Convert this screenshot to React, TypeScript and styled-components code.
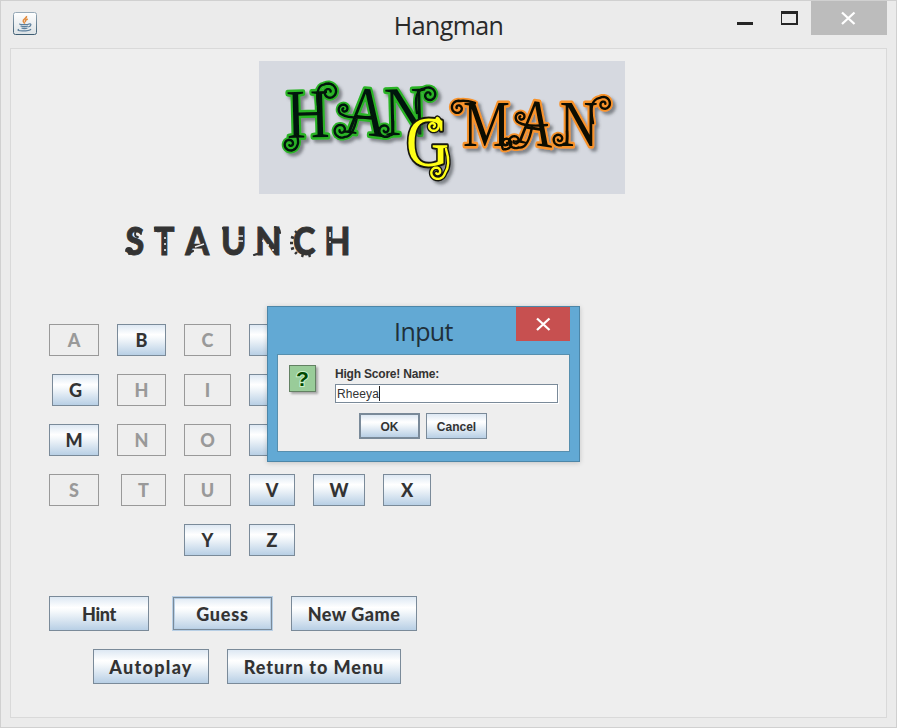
import React from "react";
import styled, { createGlobalStyle, css } from "styled-components";

const GlobalStyle = createGlobalStyle`
  * { box-sizing: border-box; }
  body { margin: 0; overflow: hidden; background: #ebebeb; }
  button { cursor: default; }
`;

const metal = "linear-gradient(#dde8f3 0%, #ffffff 32%, #f7fafc 42%, #b8cfe5 100%)";

const Window = styled.div`
  width: 897px;
  height: 728px;
  border: 1px solid #d0d0d0;
  background: #ebebeb;
  padding: 0 9px 9px;
  display: flex;
  flex-direction: column;
  position: relative;
`;

const TitleBar = styled.header`
  height: 47px;
  flex: none;
  display: grid;
  grid-template-columns: 150px 1fr 150px;
`;

const AppIcon = styled.svg`
  margin: 11px 0 0 3px;
`;

const Title = styled.h1`
  margin: 0;
  padding-top: 6px;
  font: 400 25px/36px "Open Sans", "Noto Sans", sans-serif;
  letter-spacing: -0.6px;
  color: #2a2a2a;
  text-align: center;
`;

const Controls = styled.div`
  display: flex;
  justify-content: flex-end;
`;

const ControlButton = styled.button<{ $w: number; $bg?: string }>`
  width: ${(p) => p.$w}px;
  height: 34px;
  flex: none;
  border: 0;
  padding: 0;
  background: ${(p) => p.$bg ?? "transparent"};
  display: block;
  svg { display: block; }
`;

const Client = styled.main`
  flex: 1;
  border: 1px solid #d9d9d9;
  background: #eeeeee;
  padding: 12px 0 0 38px;
  display: flex;
  flex-direction: column;
  align-items: flex-start;
`;

const Logo = styled.svg`
  margin-left: 210px;
  display: block;
  flex: none;
  background: #d6d9e0;
`;

const Word = styled.svg`
  margin: 26px 0 0 70px;
  display: block;
  flex: none;
`;

const Keys = styled.div`
  margin-top: 58px;
  display: grid;
  grid-template-columns: 50px 49px 47px 46px 52px 48px;
  grid-auto-rows: 32px;
  column-gap: 18px;
  row-gap: 18px;
`;

const GameButton = styled.button`
  border: 1px solid #7a8a99;
  border-radius: 0;
  padding: 0;
  background: ${metal};
  color: #333333;
  font: 900 18px/1 Lato, "Open Sans", sans-serif;
  display: flex;
  align-items: center;
  justify-content: center;
  white-space: nowrap;
`;

const Key = styled(GameButton)<{ $col?: number; $w?: number }>`
  height: 32px;
  justify-self: ${(p) => (p.$w ? "end" : "stretch")};
  ${(p) => p.$w && css`width: ${p.$w}px;`}
  ${(p) => p.$col && css`grid-column: ${p.$col};`}
  &:disabled {
    background: none;
    border-color: #999999;
    color: #999999;
  }
`;

const Actions = styled.div<{ $top: number; $left?: number }>`
  display: flex;
  gap: 18px;
  margin: ${(p) => p.$top}px 0 0 ${(p) => p.$left ?? 0}px;
`;

const Action = styled(GameButton)<{ $w: number; $spacing: number; $focused?: boolean }>`
  width: ${(p) => p.$w}px;
  height: 35px;
  padding-top: 1px;
  letter-spacing: ${(p) => p.$spacing}px;
  ${(p) =>
    p.$focused &&
    css`
      margin-left: 5px;
      outline: 0;
      border-color: #b8cfe5;
      box-shadow: inset 0 0 0 1px #7a8a99, inset 0 0 0 2px #b8cfe5;
    `}
`;

const Dialog = styled.section`
  position: absolute;
  left: 266px;
  top: 305px;
  width: 313px;
  height: 156px;
  border: 1px solid #4c86a8;
  background: #62a9d4;
  box-shadow: 0 1px 5px rgba(0, 0, 0, 0.18);
  padding: 0 9px 9px;
  display: flex;
  flex-direction: column;
`;

const DialogBar = styled.header`
  height: 47px;
  flex: none;
  display: grid;
  grid-template-columns: 54px 1fr 54px;
`;

const DialogTitle = styled(Title)`
  color: #20303a;
`;

const DialogBody = styled.div`
  flex: 1;
  border: 1px solid #578fae;
  background: #eeeeee;
  display: grid;
  grid-template-columns: 46px 223px;
  padding: 10px 0 0 11px;
`;

const Form = styled.div`
  display: flex;
  flex-direction: column;
`;

const Label = styled.label`
  font: bold 12px/19px "Liberation Sans", Arial, sans-serif;
  color: #333333;
  height: 19px;
  letter-spacing: -0.2px;
`;

const Field = styled.div`
  height: 19px;
  border: 1px solid #7a8a99;
  box-shadow: 1px 1px 0 #ffffff;
  background: #ffffff;
  font: 12px/19px "Liberation Sans", Arial, sans-serif;
  letter-spacing: 0.1px;
  color: #333333;
  padding-left: 1px;
  display: flex;
`;

const Caret = styled.span`
  width: 1px;
  height: 15px;
  margin-top: 1px;
  background: #222;
`;

const DialogActions = styled.div`
  display: flex;
  gap: 6px;
  margin: 10px 0 0 24px;
`;

const DialogButton = styled.button<{ $primary?: boolean }>`
  width: 61px;
  height: 26px;
  padding: 1px 0 0;
  border: ${(p) => (p.$primary ? 2 : 1)}px solid #7a8a99;
  border-radius: 0;
  background: ${metal};
  color: #333333;
  font: bold 12px/1 "Liberation Sans", Arial, sans-serif;
`;

const Cross = ({ width, x }: { width: number; x: number }) => (
  <svg width={width} height="34">
    <path d={`M${x} 11.5l12.5 11.5M${x + 12.5} 11.5l-12.5 11.5`} stroke="#fff" strokeWidth="2.3" fill="none" />
  </svg>
);

const JavaIcon = () => (
  <AppIcon width="24" height="24" viewBox="0 0 24 24">
    <defs>
      <linearGradient id="tile" x2="0" y2="1">
        <stop offset="0" stopColor="#fff" />
        <stop offset="1" stopColor="#dce2e5" />
      </linearGradient>
      <linearGradient id="tileEdge" x2="0" y2="1">
        <stop offset="0" stopColor="#98aab8" />
        <stop offset="1" stopColor="#3e5d73" />
      </linearGradient>
    </defs>
    <rect x=".5" y=".5" width="23" height="22" rx="2" fill="url(#tile)" stroke="url(#tileEdge)" />
    <path d="M13.5 4c1 2-4 3-3.3 5.2.2 1 1.4 1.5 1.3 2.5M14.7 7c-2 1-3 1.5-2 3" fill="none" stroke="#e38b3d" strokeWidth="1.5" />
    <path d="M7 11.8c-2 1.1 8 1.2 9.2.1M7.5 14q4 1.2 7.5 0M8.5 16q3 1 6 0M16 12c3-1 2.2 2.6-.8 3M6 17.3c-5 2 10 2.3 12-.2" fill="none" stroke="#5c7f9d" strokeWidth="1.25" />
  </AppIcon>
);

/** A flourish: a tail that bends into a tightening spiral. Angles in degrees, turn +1 is clockwise. */
function curl(tail: [number, number], bend: [number, number], cx: number, cy: number, r: number, from: number, turn: 1 | -1) {
  const at = (t: number) => {
    const a = ((from + turn * t * 470) * Math.PI) / 180;
    const rr = r * (1 - 0.82 * t);
    return `${(cx + rr * Math.cos(a)).toFixed(1)} ${(cy + rr * Math.sin(a)).toFixed(1)}`;
  };
  let d = `M${tail[0]} ${tail[1]}Q${bend[0]} ${bend[1]} ${at(0)}`;
  for (let i = 1; i <= 28; i++) d += `L${at(i / 28)}`;
  return d;
}

const greenCurls = [
  curl([38, 74], [40, 82], 31, 83, 7.5, 10, 1),
  curl([60, 50], [55, 25], 70, 31, 9, 235, 1),
  curl([113, 56], [90, 58], 85, 48, 6, 110, 1),
  curl([98, 56], [94, 76], 82, 69, 8, 60, 1),
  curl([134, 60], [134, 76], 126, 69, 7.5, 40, 1),
  curl([158, 52], [154, 29], 170, 34, 8, 235, 1),
].join("");
const orangeCurls = [
  curl([216, 42], [206, 39], 199, 47, 7.5, 290, -1),
  curl([242, 74], [243, 90], 247, 82, 6.5, 110, -1),
  curl([288, 64], [268, 66], 262, 56, 6, 110, 1),
  curl([273, 66], [269, 88], 256, 80, 7.5, 60, 1),
  curl([308, 70], [309, 84], 300, 78, 7, 40, 1),
  curl([334, 62], [329, 39], 345, 43, 7.5, 235, 1),
].join("");
const yellowCurls = [
  curl([187, 88], [192, 104], 178, 111, 8, 10, 1),
  curl([181, 60], [178, 54], 174, 65, 6.5, 300, 1),
].join("");

type ArtProps = {
  curls: string;
  ink: string;
  glow: string;
  transform: string;
  x: string;
  y?: string;
  rotate?: string;
  size: number;
  edge?: number;
  children: string;
};

const LogoArt = ({ curls, ink, glow, transform, x, y, rotate, size, edge = 5, children }: ArtProps) => (
  <g filter="url(#drop)" fontFamily="Liberation Serif" strokeLinejoin="round" strokeLinecap="round">
    <path d={curls} fill="none" stroke={glow} strokeWidth={edge + 1} />
    <text transform={transform} x={x} y={y} rotate={rotate} fontSize={size} fill={ink} stroke={glow} strokeWidth={edge} paintOrder="stroke">
      {children}
    </text>
    <path d={curls} fill="none" stroke={ink} strokeWidth="2.4" />
  </g>
);

const HangmanLogo = () => (
  <Logo width="366" height="133" viewBox="0 0 366 133">
    <defs>
      <filter id="drop" x="-20%" y="-20%" width="150%" height="150%">
        <feDropShadow dx="3" dy="3" stdDeviation="1.8" floodColor="#3a3d45" floodOpacity=".55" />
      </filter>
    </defs>
    <LogoArt curls={greenCurls} ink="#061407" glow="#2cb428" transform="translate(28 77) rotate(-1.5) scale(.85 1)" x="0 66 115" y="0 -4 0" rotate="0 7 0" size={70}>
      HAN
    </LogoArt>
    <LogoArt curls={orangeCurls} ink="#0f0a04" glow="#f8932c" transform="translate(204 85) scale(.8 1)" x="0 64 121" y="0 -4 0" rotate="0 7 0" size={66}>
      MAN
    </LogoArt>
    <LogoArt curls={yellowCurls} ink="#ffff18" glow="#15150a" transform="translate(147 105) scale(.84 1)" x="0" size={71} edge={4}>
      G
    </LogoArt>
  </Logo>
);

const SecretWord = () => (
  <Word width="240" height="46" viewBox="0 0 240 46">
    <text transform="scale(.92 1)" x="7 38 72 111 148 189 223" y="35" fontFamily="Lato" fontWeight="900" fontSize="37" fill="#333" stroke="#333" strokeWidth=".8">STAUNCH</text>
    <g fill="none" stroke="#333" strokeWidth="2.2" strokeLinecap="round">
      <path d="M36 8q1 4 5 3M68 34l6-3M135 35l7-2M156 7q5 1 5 6M104 8l2 4" />
      <path strokeWidth="2.4" strokeLinecap="butt" d="M178 13l-2-2M175 18l-3-1M174 23h-3M175 28l-3 1M178 32l-2 2M184 34l-1 3M190 34l1 3M184 11l-1-3M190 11l1-3" />
      <path d="M7 31a3 3 0 1 1 3 3M22 14a3 3 0 1 0 -3 3" strokeWidth="1.8" />
    </g>
    <g stroke="#eee" strokeWidth="1.6" fill="none">
      <path d="M46 17v2M46 23v2M46 29v2M76 27l9-3M144 20v2M149 24v2M154 29v2M211 12v5M211 21v2M119 16h5M119 21h5" />
    </g>
  </Word>
);

type KeySpec = { letter?: string; used?: boolean; w?: number; col?: number };
const keys: KeySpec[] = [
  { letter: "A", used: true }, { letter: "B" }, { letter: "C", used: true }, {},
  { letter: "G", w: 47, col: 1 }, { letter: "H", used: true }, { letter: "I", used: true }, {},
  { letter: "M", col: 1 }, { letter: "N", used: true }, { letter: "O", used: true }, {},
  { letter: "S", used: true, col: 1 }, { letter: "T", used: true, w: 45 }, { letter: "U", used: true }, { letter: "V" }, { letter: "W" }, { letter: "X" },
  { letter: "Y", col: 3 }, { letter: "Z", col: 4 },
];

export default function App() {
  return (
    <>
      <GlobalStyle />
      <Window>
        <TitleBar>
          <JavaIcon />
          <Title>Hangman</Title>
          <Controls>
            <ControlButton $w={44} aria-label="Minimize">
              <svg width="44" height="34"><path d="M0 22.5h16" stroke="#252525" strokeWidth="3" /></svg>
            </ControlButton>
            <ControlButton $w={30} aria-label="Maximize">
              <svg width="30" height="34" shapeRendering="crispEdges"><path d="M-1 10h18v14h-18zM1 13v9h14v-9z" transform="translate(0 0)" fill="#252525" fillRule="evenodd" /></svg>
            </ControlButton>
            <ControlButton $w={76} $bg="#bcbcbc" aria-label="Close">
              <Cross width={76} x={31} />
            </ControlButton>
          </Controls>
        </TitleBar>
        <Client>
          <HangmanLogo />
          <SecretWord />
          <Keys>
            {keys.map((k, i) => (
              <Key key={i} disabled={k.used} $w={k.w} $col={k.col}>{k.letter}</Key>
            ))}
          </Keys>
          <Actions $top={40}>
            <Action $w={100} $spacing={-0.3}>Hint</Action>
            <Action $w={101} $spacing={0.8} $focused>Guess</Action>
            <Action $w={126} $spacing={0.5}>New Game</Action>
          </Actions>
          <Actions $top={18} $left={44}>
            <Action $w={116} $spacing={1.3}>Autoplay</Action>
            <Action $w={174} $spacing={0.95}>Return to Menu</Action>
          </Actions>
        </Client>
        <Dialog>
          <DialogBar>
            <span />
            <DialogTitle>Input</DialogTitle>
            <ControlButton $w={54} $bg="#c75050" aria-label="Close dialog">
              <Cross width={54} x={21} />
            </ControlButton>
          </DialogBar>
          <DialogBody>
            <svg width="34" height="34" viewBox="0 0 34 34">
              <defs>
                <filter id="iconShadow" x="-20%" y="-20%" width="150%" height="150%">
                  <feDropShadow dx="2" dy="2" stdDeviation="1" floodOpacity=".3" />
                </filter>
              </defs>
              <rect x=".5" y=".5" width="26" height="26" fill="#99cc99" stroke="#638163" filter="url(#iconShadow)" />
              <text x="13.5" y="21" textAnchor="middle" fontFamily="Liberation Sans" fontWeight="bold" fontSize="21" fill="#004800" stroke="#ccf0cc" strokeWidth="2" paintOrder="stroke">?</text>
            </svg>
            <Form>
              <Label>High Score! Name:</Label>
              <Field>Rheeya<Caret /></Field>
              <DialogActions>
                <DialogButton $primary>OK</DialogButton>
                <DialogButton>Cancel</DialogButton>
              </DialogActions>
            </Form>
          </DialogBody>
        </Dialog>
      </Window>
    </>
  );
}
